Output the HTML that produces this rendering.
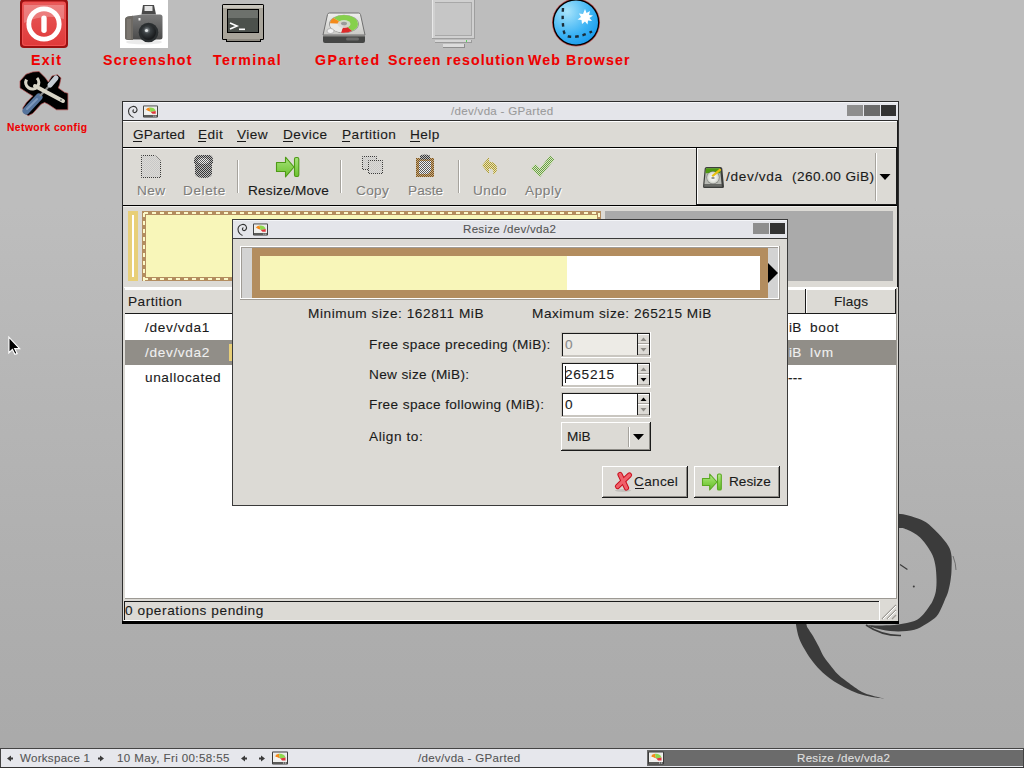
<!DOCTYPE html>
<html><head><meta charset="utf-8"><style>
html,body{margin:0;padding:0;width:1024px;height:768px;overflow:hidden}
body{position:relative;background:linear-gradient(180deg,#bdbdbd 0%,#bdbdbd 27%,#b5b5b5 53%,#aeaeae 79%,#a9a9a9 100%);font-family:"Liberation Sans",sans-serif}
.r{position:absolute}
.t{position:absolute;white-space:pre;line-height:16px;font-family:"Liberation Sans",sans-serif;-webkit-text-stroke:0.1px currentColor}
</style></head><body>
<svg class="r" style="left:0;top:0" width="1024" height="768">
<g fill="#3b3b3b">
<path d="M875.0 515.0 C878.4 512.3 891.9 513.3 898.5 513.7 C905.1 514.1 910.2 516.0 914.8 517.4 C919.4 518.8 922.1 519.6 926.0 522.3 C929.9 525.0 934.6 529.6 938.3 533.5 C942.0 537.4 946.0 542.0 948.2 545.8 C950.4 549.5 951.0 552.0 951.5 556.0 C952.0 560.0 951.6 566.1 951.5 570.0 C951.4 573.9 951.2 575.7 950.7 579.3 C950.2 582.9 949.2 588.0 948.2 591.6 C947.2 595.2 945.9 597.4 944.5 600.7 C943.1 604.0 941.3 608.6 939.7 611.5 C938.1 614.4 937.3 615.8 934.9 617.9 C932.5 620.0 928.6 622.4 925.2 624.4 C921.8 626.4 918.9 628.5 914.4 629.7 C909.9 630.9 903.7 631.4 898.3 631.4 C892.9 631.4 887.2 630.7 882.2 629.7 C877.2 628.7 868.3 626.1 868.3 625.4 C868.3 624.7 877.2 625.6 882.2 625.4 C887.2 625.2 892.9 625.1 898.3 624.4 C903.7 623.7 910.3 622.7 914.4 621.1 C918.5 619.5 920.5 617.2 923.0 614.7 C925.5 612.2 927.9 608.3 929.5 606.0 C931.1 603.7 931.7 603.1 932.7 600.7 C933.8 598.3 935.2 595.2 935.8 591.6 C936.4 588.0 936.6 583.8 936.5 579.3 C936.4 574.8 936.1 568.9 935.2 564.4 C934.3 559.9 933.5 556.5 930.9 552.0 C928.3 547.5 923.7 540.9 919.8 537.2 C915.9 533.5 910.9 531.3 907.4 529.8 C903.9 528.2 903.4 527.9 898.5 527.9 C893.6 527.9 881.9 532.1 878.0 530.0 C874.1 527.9 871.6 517.7 875.0 515.0 Z"/>
<path d="M794 605 C794.3 608.2 795.0 618.5 795.9 624.0 C796.8 629.5 797.6 634.0 799.1 638.2 C800.6 642.4 802.6 645.7 804.6 649.2 C806.6 652.7 808.4 655.7 811.0 659.2 C813.6 662.7 816.8 666.8 820.1 670.1 C823.4 673.5 826.9 676.4 831.0 679.3 C835.1 682.2 840.2 685.1 844.7 687.5 C849.2 689.9 853.5 691.9 858.0 693.5 C862.5 695.1 867.7 696.1 872.0 697.0 C876.3 697.9 882.0 698.3 884.0 698.6 C882.0 698.1 875.7 696.6 872.0 695.5 C868.3 694.4 866.1 694.2 862.0 692.0 C857.9 689.8 851.2 684.7 847.4 682.0 C843.6 679.3 841.8 678.0 839.2 675.6 C836.6 673.2 834.6 670.6 832.0 667.4 C829.4 664.2 825.9 659.9 823.7 656.5 C821.5 653.1 820.8 650.4 819.0 647.0 C817.2 643.6 814.6 638.8 813.0 636.0 C811.4 633.2 810.2 632.0 809.1 630.0 C808.0 628.0 807.1 628.2 806.4 624.0 C805.7 619.8 805.2 608.2 805.0 605.0 Z"/>
</g>
<path d="M866 625 Q882 636 901 635.5" stroke="#3b3b3b" stroke-width="1.6" fill="none"/>
<path d="M900 564.4 L907.4 569.4" stroke="#3b3b3b" stroke-width="1.2" fill="none"/>
<circle cx="913.8" cy="586.5" r="1" fill="#3b3b3b"/>
<path d="M953 556 q3 8 3 14" stroke="#3b3b3b" stroke-width="0.8" fill="none" opacity="0.7"/>
</svg>
<svg class="r" style="left:20px;top:0px" width="48" height="48" viewBox="0 0 48 48">
<defs><linearGradient id="exg" x1="0" y1="0" x2="0" y2="1"><stop offset="0" stop-color="#e85a5a"/><stop offset="1" stop-color="#e03a3a"/></linearGradient></defs>
<rect x="0" y="-1" width="48" height="49" rx="4" fill="#9a1010"/>
<rect x="2" y="1.5" width="44" height="44.5" rx="3" fill="#f05050"/>
<rect x="3" y="3" width="42" height="42" rx="3" fill="url(#exg)"/>
<path d="M4 5 h40 v14 q-20 -6 -40 4z" fill="#ffffff" opacity="0.25"/>
<circle cx="24" cy="24" r="15.2" fill="none" stroke="#ffffff" stroke-width="4.8"/>
<rect x="21.3" y="15.5" width="5.4" height="17.5" rx="2.7" fill="#ffffff"/>
</svg>
<svg class="r" style="left:120px;top:0px" width="48" height="48" viewBox="0 0 48 48">
<defs><linearGradient id="cbody" x1="0" y1="0" x2="0" y2="1"><stop offset="0" stop-color="#7a7a7a"/><stop offset="1" stop-color="#4a4a4a"/></linearGradient>
<radialGradient id="clens" cx="0.4" cy="0.35" r="0.6"><stop offset="0" stop-color="#9aa0a4"/><stop offset="0.4" stop-color="#3a3f42"/><stop offset="1" stop-color="#1a1c1e"/></radialGradient></defs>
<rect x="0" y="0" width="48" height="48" fill="#ffffff"/>
<ellipse cx="24" cy="42" rx="18" ry="2.5" fill="#000" opacity="0.08"/>
<path d="M21.5 14.5 L23 5 h11 l2 9.5z" fill="#4a4a4a"/>
<rect x="24.5" y="6" width="8" height="5" fill="#e4e4e4"/>
<path d="M5 20 q0 -3 3 -3.5 l14 -2 h18 q2.5 0 2.5 2.5 v20 q0 2.5 -2.5 2.5 h-32 q-3 0 -3 -2.5z" fill="url(#cbody)"/>
<path d="M5 20 q0 -3 3 -3.5 l5 -0.8 v24.3 h-5 q-3 0 -3 -2.5z" fill="#6e6a64"/>
<rect x="7" y="19" width="4" height="20" fill="#85817a" opacity="0.6"/>
<circle cx="28.5" cy="32.5" r="9.8" fill="#2a2e30"/>
<circle cx="28.5" cy="32.5" r="7.5" fill="url(#clens)"/>
<circle cx="26.5" cy="30.5" r="1.6" fill="#e0e4e6"/>
<rect x="18.5" y="18" width="2" height="2.5" fill="#f0f0f0"/>
</svg>
<svg class="r" style="left:216px;top:0px" width="56" height="48" viewBox="0 0 56 48">
<rect x="6" y="4" width="42" height="36" rx="1.5" fill="#000"/>
<rect x="7" y="5" width="40" height="34" fill="#a9a59b"/>
<rect x="7" y="5" width="40" height="3" fill="#c8c5bd"/>
<rect x="11" y="9" width="32" height="24" fill="#000"/>
<rect x="12" y="10" width="30" height="22" fill="#4c514c"/>
<rect x="12" y="10" width="30" height="8" fill="#6d716c"/>
<path d="M14 23 l7 3 l-7 3" stroke="#fff" stroke-width="1.6" fill="none"/>
<rect x="23" y="28.5" width="6" height="1.6" fill="#fff"/>
<rect x="10" y="39" width="35" height="3" fill="#000"/>
<rect x="11" y="39" width="33" height="2" fill="#8f8b82"/>
</svg>
<svg class="r" style="left:318px;top:0px" width="56" height="48" viewBox="0 0 56 48">
<defs><linearGradient id="gpf" x1="0" y1="0" x2="0" y2="1"><stop offset="0" stop-color="#efefed"/><stop offset="1" stop-color="#c9c9c6"/></linearGradient></defs>
<path d="M11.5 13 h29 q1.5 0 2 1.5 l4.5 20.5 h-42 l4.5 -20.5 q0.5 -1.5 2 -1.5z" fill="url(#gpf)" stroke="#707070" stroke-width="1"/>
<path d="M5 35 h42 v6 q0 2 -2 2 h-38 q-2 0 -2 -2z" fill="#454645"/>
<path d="M5 35 h42 v1.5 h-42z" fill="#8a8a88"/>
<rect x="28" y="37.5" width="13" height="3" rx="1.5" fill="#6a6b6a"/>
<ellipse cx="26" cy="24" rx="15" ry="9.2" fill="#9a9a98"/>
<ellipse cx="26" cy="24" rx="14" ry="8.5" fill="#e6e6e4"/>
<path d="M26 24 L15.5 18 A14 8.5 0 0 1 40 24 A14 8.5 0 0 1 34 31 z" fill="#86d04c"/>
<path d="M26 24 L34 31 A14 8.5 0 0 1 23 32.5 z" fill="#dd2a2a"/>
<path d="M26 24 L12 23.5 A14 8.5 0 0 1 15.5 18 z" fill="#f38a1a"/>
<path d="M26 24 L12 23.5 A14 8.5 0 0 0 23 32.5 z" fill="#e9e9e7"/>
<ellipse cx="26" cy="24" rx="6.5" ry="4" fill="#d9d9d7" opacity="0.9"/>
<ellipse cx="26" cy="23.5" rx="3" ry="1.8" fill="#9a9a9a"/>
<ellipse cx="12.5" cy="31" rx="3.5" ry="2.5" fill="#f4f4f4" stroke="#9a9a9a" stroke-width="0.6"/>
</svg>
<svg class="r" style="left:424px;top:0px" width="60" height="48" viewBox="0 0 60 48">
<rect x="8" y="-2" width="43" height="41" fill="#9e9e9e"/>
<rect x="8" y="-2" width="42" height="40" fill="#e8e8e8"/>
<rect x="9" y="-1" width="41" height="39" fill="#d0d0d0"/>
<rect x="11" y="2" width="37" height="34" fill="#a8a8a8"/>
<rect x="11" y="3" width="36" height="32" fill="#c6c6c6"/>
<rect x="11" y="40" width="37" height="3" fill="#9a9a9a"/>
<rect x="11" y="40" width="36" height="2" fill="#d6d6d6"/>
<rect x="42" y="40" width="1" height="2" fill="#5ad05a"/>
<rect x="19" y="44" width="22" height="4" fill="#8e8e8e"/>
<rect x="19" y="44" width="21" height="3" fill="#dcdcdc"/>
</svg>
<svg class="r" style="left:546px;top:0px" width="60" height="48" viewBox="0 0 60 48">
<defs><radialGradient id="wbg" cx="0.3" cy="0.25" r="0.9"><stop offset="0" stop-color="#a8e4fb"/><stop offset="0.6" stop-color="#3cb3f4"/><stop offset="1" stop-color="#1496ec"/></radialGradient></defs>
<circle cx="30" cy="22.5" r="24" fill="#c05050"/>
<circle cx="30" cy="22.5" r="23.3" fill="#000"/>
<circle cx="30" cy="22.5" r="22" fill="url(#wbg)"/>
<path d="M17 8 q-1 14 1 24 q1 4 5 4.5 q10 1.5 23 -5" stroke="#1b2b36" stroke-width="2.4" stroke-dasharray="3.5 4" fill="none"/>
<polygon fill="#fff" points="39,9 40.5,13 44,11 43,15 47,15.5 43.5,18 46,21 42,20.5 41.5,24.5 39,21.5 36,24 35.5,20 31.5,19.5 35,17 33,13.5 37,14"/>
</svg>
<svg class="r" style="left:10px;top:66px" width="70" height="54" viewBox="0 0 70 54">
<path d="M10 15 L16 8.2 L22.8 5.9 L29 5.5 L35.5 11.9 L38.3 16 L42 10 L47.4 8.7 L51 11.9 L49.7 18.2 L48.3 21.9 L54.7 26.4 L57.9 27.3 L57.9 43.8 L46.5 43.8 L38.3 38.3 L34.6 36.5 L31 38.3 L22.8 47.4 L18.2 49.7 L13.7 46.5 L12.8 42 L16.4 36.5 L22.8 30 L18.2 27.3 L10 21.9 Z" fill="#000" stroke="#b85050" stroke-width="0.7"/>
<path d="M16 45 L29 31" stroke="#56749c" stroke-width="7" stroke-linecap="round"/>
<path d="M17 43 L27 33" stroke="#7d98bc" stroke-width="2" stroke-linecap="round"/>
<path d="M30 30 L40 19" stroke="#8a8a8a" stroke-width="2"/>
<path d="M40 19 L46 12" stroke="#c5ccd4" stroke-width="5" stroke-linecap="round"/>
<path d="M25 20 L53 35" stroke="#d8d4c6" stroke-width="4" stroke-linecap="round"/>
<path d="M27 12 A6.5 6.5 0 1 1 16.5 13.5" stroke="#d8d4c6" stroke-width="3.2" fill="none"/>
<circle cx="51" cy="34" r="1" fill="#777"/>
</svg>
<div class="t" style="left:31px;top:52px;font-size:14.18px;letter-spacing:1.289px;color:#ee0000;font-weight:bold;">Exit</div>
<div class="t" style="left:103px;top:52px;font-size:14.18px;letter-spacing:1.247px;color:#ee0000;font-weight:bold;">Screenshot</div>
<div class="t" style="left:213px;top:52px;font-size:14.18px;letter-spacing:1.396px;color:#ee0000;font-weight:bold;">Terminal</div>
<div class="t" style="left:315px;top:52px;font-size:14.18px;letter-spacing:1.494px;color:#ee0000;font-weight:bold;">GParted</div>
<div class="t" style="left:388px;top:52px;font-size:14.18px;letter-spacing:1.045px;color:#ee0000;font-weight:bold;">Screen resolution</div>
<div class="t" style="left:528px;top:52px;font-size:14.18px;letter-spacing:1.120px;color:#ee0000;font-weight:bold;">Web Browser</div>
<div class="t" style="left:7px;top:120px;font-size:10.29px;letter-spacing:0.443px;color:#ee0000;font-weight:bold;">Network config</div>
<div class="r" style="left:122px;top:101px;width:777px;height:523px;background:#2e2e2e;"></div>
<div class="r" style="left:123px;top:102px;width:775px;height:18px;background:#e4e5ea;"></div>
<div class="r" style="left:123px;top:102px;width:775px;height:1px;background:#f4f5f8;"></div>
<div class="r" style="left:123px;top:121px;width:775px;height:500px;background:#dcdad5;"></div>
<div class="r" style="left:123px;top:121px;width:775px;height:1px;background:#ffffff;"></div>
<div class="t" style="left:451px;top:103px;font-size:11.55px;letter-spacing:0.305px;color:#9a9a9a;">/dev/vda - GParted</div>
<div class="r" style="left:847px;top:105px;width:16px;height:11px;background:#8e8e8e;"></div>
<div class="r" style="left:864px;top:105px;width:16px;height:11px;background:#6b6b6b;"></div>
<div class="r" style="left:881px;top:105px;width:15px;height:11px;background:#333333;"></div>
<svg class="r" style="left:126px;top:104px" width="34" height="16" viewBox="0 0 34 16">
<path d="M7.5 13.5 C3 12 1.5 8 3 5 C4.5 2 9 1.5 10.5 4 C12 6.5 10 9 8 8.5 C6.5 8 6.5 6 8 5.8" stroke="#333" stroke-width="1.1" fill="none"/>
</svg>
<svg class="r" style="left:143px;top:105px" width="15" height="13" viewBox="0 0 16 14" preserveAspectRatio="none">
<rect x="0" y="0.5" width="16" height="13" rx="1" fill="#3a3a3a"/>
<rect x="1" y="1.5" width="14" height="9.5" fill="#f0f0ee"/>
<rect x="2.2" y="2.5" width="11.6" height="7.5" fill="#e8e8e6"/>
<path d="M8 7.5 L3 5.5 Q4 3 7 2.8z" fill="#f58a1c"/>
<path d="M8 7.5 L7 2.8 Q12 2.4 13.5 6.5z" fill="#8ed84c"/>
<path d="M8 7.5 L13.5 6.5 L13.5 9.5 L10 9.5z" fill="#e0383c"/>
<path d="M8 7.5 L3 5.5 L2.5 9.5 L10 9.5z" fill="#f4f4f2"/>
<rect x="1" y="11" width="14" height="2" fill="#5a5a58"/>
<rect x="11" y="11.5" width="1.2" height="1" fill="#ddd"/><rect x="13" y="11.5" width="1.2" height="1" fill="#ddd"/>
</svg>
<svg class="r" style="left:130px;top:150px" width="440" height="32" viewBox="0 0 440 32"><defs><pattern id="pw" width="2" height="2" patternUnits="userSpaceOnUse"><rect width="1" height="1" fill="#7a7a7a"/><rect x="1" y="1" width="1" height="1" fill="#7a7a7a"/><rect x="1" y="0" width="1" height="1" fill="#f6f6f6"/><rect x="0" y="1" width="1" height="1" fill="#f6f6f6"/></pattern><pattern id="pl" width="2" height="2" patternUnits="userSpaceOnUse"><rect width="1" height="1" fill="#ffffff"/><rect x="1" y="1" width="1" height="1" fill="#ffffff"/></pattern><pattern id="pd" width="2" height="2" patternUnits="userSpaceOnUse"><rect width="1" height="1" fill="#3a3a3a"/><rect x="1" y="1" width="1" height="1" fill="#3a3a3a"/></pattern><pattern id="pm" width="2" height="2" patternUnits="userSpaceOnUse"><rect width="1" height="1" fill="#c8c8c8"/><rect x="1" y="1" width="1" height="1" fill="#c8c8c8"/></pattern><pattern id="pb" width="2" height="2" patternUnits="userSpaceOnUse"><rect width="1" height="1" fill="#8a6a3a"/><rect x="1" y="1" width="1" height="1" fill="#8a6a3a"/></pattern><pattern id="pyl" width="2" height="2" patternUnits="userSpaceOnUse"><rect width="1" height="1" fill="#a89838"/><rect x="1" y="1" width="1" height="1" fill="#a89838"/><rect x="1" y="0" width="1" height="1" fill="#ece4b0"/><rect x="0" y="1" width="1" height="1" fill="#ece4b0"/></pattern><pattern id="pg" width="2" height="2" patternUnits="userSpaceOnUse"><rect width="1" height="1" fill="#6a9a48"/><rect x="1" y="1" width="1" height="1" fill="#6a9a48"/><rect x="1" y="0" width="1" height="1" fill="#d8ecc0"/><rect x="0" y="1" width="1" height="1" fill="#d8ecc0"/></pattern><pattern id="pdl" width="2" height="2" patternUnits="userSpaceOnUse"><rect width="1" height="1" fill="#353535"/><rect x="1" y="1" width="1" height="1" fill="#353535"/><rect x="1" y="0" width="1" height="1" fill="#bdbdbd"/><rect x="0" y="1" width="1" height="1" fill="#bdbdbd"/></pattern><pattern id="pbb" width="2" height="2" patternUnits="userSpaceOnUse"><rect width="1" height="1" fill="#7a5420"/><rect x="1" y="1" width="1" height="1" fill="#7a5420"/><rect x="1" y="0" width="1" height="1" fill="#c8ab80"/><rect x="0" y="1" width="1" height="1" fill="#c8ab80"/></pattern><pattern id="pll" width="2" height="2" patternUnits="userSpaceOnUse"><rect width="1" height="1" fill="#5a5a5a"/><rect x="1" y="1" width="1" height="1" fill="#5a5a5a"/><rect x="1" y="0" width="1" height="1" fill="#f2f2f2"/><rect x="0" y="1" width="1" height="1" fill="#f2f2f2"/></pattern><linearGradient id="grn" x1="0" y1="0" x2="0" y2="1"><stop offset="0" stop-color="#a6e27a"/><stop offset="1" stop-color="#6cc22e"/></linearGradient></defs>
<path d="M11 5 h14 l6 6 v17 h-20z" fill="url(#pm)"/>
<path d="M11.5 5.5 h13.5 l5.5 5.5 v16.5 h-19z" fill="none" stroke="url(#pd)" stroke-width="1"/>
<path d="M64 10 q1 -5 5 -5 h10 q4 0 4 5 v3 h-1 v11 q-1 4 -8 4 q-8 0 -9 -4 v-11 h-1z" fill="url(#pdl)"/>
<ellipse cx="73.5" cy="11" rx="6" ry="3" fill="url(#pll)"/>
<path d="M66 15 v10 M70 16 v10 M77 16 v10 M81 15 v10" stroke="url(#pd)" stroke-width="1"/>
<path d="M232 6 h15 v14 h-15z" fill="url(#pm)"/>
<path d="M232.5 6.5 h14 v13 h-14z" fill="none" stroke="url(#pd)"/>
<path d="M238 10 h15 v14 h-15z" fill="#dcdad5"/>
<path d="M238 10 h15 v14 h-15z" fill="url(#pm)"/>
<path d="M238.5 10.5 h14 v13 h-14z" fill="none" stroke="url(#pd)"/>
<path d="M286 8 h18 v19 h-18z" fill="url(#pbb)"/>
<path d="M290 5.5 q5 -2 10 0 v4 h-10z" fill="url(#pdl)"/>
<path d="M289 11 h12 v10 l-3 3 h-9z" fill="url(#pll)"/>
<path d="M352 15.5 l7 -8.5 v4.5 q8 1 8 7 q0 4 -4 6.5 q2 -6 -4 -6.5 v5.5z" fill="url(#pyl)"/>
<path d="M401 18.5 l4.5 -4.5 l4.5 4.5 l10 -13 l4.5 4 l-14.5 17.5z" fill="url(#pg)"/>
<path d="M146.5 12.5 h9 v-5.3 l8.5 9.8 l-8.5 9.8 v-5.3 h-9 z" fill="url(#grn)" stroke="#4e9a16" stroke-width="1.1" stroke-linejoin="round"/>
<rect x="164.5" y="7.5" width="4.3" height="19" rx="1.5" fill="url(#grn)" stroke="#4e9a16" stroke-width="1.1"/>
</svg>
<div class="r" style="left:123px;top:147px;width:775px;height:1px;background:#000000;"></div>
<div class="r" style="left:123px;top:148px;width:775px;height:1px;background:#ffffff;"></div>
<div class="t" style="left:133px;top:127px;font-size:13.65px;letter-spacing:0.191px;color:#1a1a1a;">GParted</div>
<div class="r" style="left:133px;top:141px;width:9px;height:1px;background:#1a1a1a;"></div>
<div class="t" style="left:198px;top:127px;font-size:13.65px;letter-spacing:0.435px;color:#1a1a1a;">Edit</div>
<div class="r" style="left:198px;top:141px;width:8px;height:1px;background:#1a1a1a;"></div>
<div class="t" style="left:237px;top:127px;font-size:13.65px;letter-spacing:0.404px;color:#1a1a1a;">View</div>
<div class="r" style="left:237px;top:141px;width:9px;height:1px;background:#1a1a1a;"></div>
<div class="t" style="left:283px;top:127px;font-size:13.65px;letter-spacing:0.482px;color:#1a1a1a;">Device</div>
<div class="r" style="left:283px;top:141px;width:10px;height:1px;background:#1a1a1a;"></div>
<div class="t" style="left:342px;top:127px;font-size:13.65px;letter-spacing:0.476px;color:#1a1a1a;">Partition</div>
<div class="r" style="left:342px;top:141px;width:8px;height:1px;background:#1a1a1a;"></div>
<div class="t" style="left:410px;top:127px;font-size:13.65px;letter-spacing:0.416px;color:#1a1a1a;">Help</div>
<div class="r" style="left:410px;top:141px;width:10px;height:1px;background:#1a1a1a;"></div>
<div class="r" style="left:123px;top:205px;width:775px;height:1px;background:#000000;"></div>
<div class="r" style="left:123px;top:206px;width:775px;height:1px;background:#f0efec;"></div>
<div class="t" style="left:137px;top:183px;font-size:13.65px;letter-spacing:0.383px;color:#7f7e7b;text-shadow:1px 1px 0 #fff">New</div>
<div class="t" style="left:183px;top:183px;font-size:13.65px;letter-spacing:0.567px;color:#7f7e7b;text-shadow:1px 1px 0 #fff">Delete</div>
<div class="t" style="left:248px;top:183px;font-size:13.65px;letter-spacing:0.208px;color:#1a1a1a;">Resize/Move</div>
<div class="t" style="left:356px;top:183px;font-size:13.65px;letter-spacing:0.306px;color:#7f7e7b;text-shadow:1px 1px 0 #fff">Copy</div>
<div class="t" style="left:408px;top:183px;font-size:13.65px;letter-spacing:0.062px;color:#7f7e7b;text-shadow:1px 1px 0 #fff">Paste</div>
<div class="t" style="left:473px;top:183px;font-size:13.65px;letter-spacing:0.361px;color:#7f7e7b;text-shadow:1px 1px 0 #fff">Undo</div>
<div class="t" style="left:525px;top:183px;font-size:13.65px;letter-spacing:0.536px;color:#7f7e7b;text-shadow:1px 1px 0 #fff">Apply</div>
<div class="r" style="left:237px;top:160px;width:1px;height:33px;background:#a6a39d;"></div>
<div class="r" style="left:238px;top:160px;width:1px;height:33px;background:#ffffff;"></div>
<div class="r" style="left:340px;top:160px;width:1px;height:33px;background:#a6a39d;"></div>
<div class="r" style="left:341px;top:160px;width:1px;height:33px;background:#ffffff;"></div>
<div class="r" style="left:458px;top:160px;width:1px;height:33px;background:#a6a39d;"></div>
<div class="r" style="left:459px;top:160px;width:1px;height:33px;background:#ffffff;"></div>
<div class="r" style="left:696px;top:148px;width:201px;height:57px;background:#1a1a1a;"></div>
<div class="r" style="left:697px;top:148px;width:199px;height:56px;background:#ffffff;"></div>
<div class="r" style="left:698px;top:149px;width:198px;height:55px;background:#dcdad5;"></div>
<div class="t" style="left:726px;top:169px;font-size:13.65px;letter-spacing:0.650px;color:#1a1a1a;">/dev/vda</div>
<div class="t" style="left:792px;top:169px;font-size:13.65px;letter-spacing:0.438px;color:#1a1a1a;">(260.00 GiB)</div>
<div class="r" style="left:875px;top:153px;width:1px;height:48px;background:#a6a39d;"></div>
<div class="r" style="left:876px;top:153px;width:1px;height:48px;background:#ffffff;"></div>
<svg class="r" style="left:702px;top:166px" width="23" height="23" viewBox="0 0 23 23">
<defs><radialGradient id="hdisk" cx="0.5" cy="0.5" r="0.5"><stop offset="0" stop-color="#ffffff"/><stop offset="0.7" stop-color="#e4e6e0"/><stop offset="1" stop-color="#c8ccc4"/></radialGradient></defs>
<path d="M3.5 1 h15 q1.5 0 1.8 1.5 l1.7 18 q0 1.5 -1.5 1.5 h-18 q-1.5 0 -1.5 -1.5 l1.7 -18 q0.3 -1.5 1.8 -1.5z" fill="#3c3e3c"/>
<path d="M4 2.2 h14 l1.6 16 h-17.2z" fill="#b8bab4"/>
<path d="M4 2.2 h14 l0.5 5 h-15z" fill="#4e9a10"/>
<path d="M2.4 18.2 h17.2 l0.3 2.6 h-17.8z" fill="#6a6c68"/>
<circle cx="11" cy="11.5" r="6.6" fill="#555" opacity="0.55"/>
<circle cx="11" cy="11.5" r="6" fill="url(#hdisk)"/>
<ellipse cx="11" cy="12" rx="1.8" ry="1.1" fill="#8a8c88"/>
<path d="M9.5 9.5 L17.5 2.8 Q19.5 2.5 19 4.5 L11 11z" fill="#e8c010"/>
</svg>
<svg class="r" style="left:879px;top:173px" width="13" height="8"><polygon points="0.5,1 11.5,1 6,7" fill="#000"/></svg>
<div class="r" style="left:128px;top:211px;width:10px;height:70px;background:#e8cf78;"></div>
<div class="r" style="left:132px;top:215px;width:2px;height:62px;background:#ffffff;"></div>
<div class="r" style="left:142px;top:211px;width:459px;height:70px;background:#b38d5f;"></div>
<div class="r" style="left:146px;top:215px;width:451px;height:62px;background:#f8f6b9;"></div>
<svg class="r" style="left:142px;top:211px" width="459" height="70" fill="#fbf8c8"><rect x="2" y="1" width="4" height="2"/><rect x="2" y="67" width="4" height="2"/><rect x="10" y="1" width="4" height="2"/><rect x="10" y="67" width="4" height="2"/><rect x="18" y="1" width="4" height="2"/><rect x="18" y="67" width="4" height="2"/><rect x="26" y="1" width="4" height="2"/><rect x="26" y="67" width="4" height="2"/><rect x="34" y="1" width="4" height="2"/><rect x="34" y="67" width="4" height="2"/><rect x="42" y="1" width="4" height="2"/><rect x="42" y="67" width="4" height="2"/><rect x="50" y="1" width="4" height="2"/><rect x="50" y="67" width="4" height="2"/><rect x="58" y="1" width="4" height="2"/><rect x="58" y="67" width="4" height="2"/><rect x="66" y="1" width="4" height="2"/><rect x="66" y="67" width="4" height="2"/><rect x="74" y="1" width="4" height="2"/><rect x="74" y="67" width="4" height="2"/><rect x="82" y="1" width="4" height="2"/><rect x="82" y="67" width="4" height="2"/><rect x="90" y="1" width="4" height="2"/><rect x="90" y="67" width="4" height="2"/><rect x="98" y="1" width="4" height="2"/><rect x="98" y="67" width="4" height="2"/><rect x="106" y="1" width="4" height="2"/><rect x="106" y="67" width="4" height="2"/><rect x="114" y="1" width="4" height="2"/><rect x="114" y="67" width="4" height="2"/><rect x="122" y="1" width="4" height="2"/><rect x="122" y="67" width="4" height="2"/><rect x="130" y="1" width="4" height="2"/><rect x="130" y="67" width="4" height="2"/><rect x="138" y="1" width="4" height="2"/><rect x="138" y="67" width="4" height="2"/><rect x="146" y="1" width="4" height="2"/><rect x="146" y="67" width="4" height="2"/><rect x="154" y="1" width="4" height="2"/><rect x="154" y="67" width="4" height="2"/><rect x="162" y="1" width="4" height="2"/><rect x="162" y="67" width="4" height="2"/><rect x="170" y="1" width="4" height="2"/><rect x="170" y="67" width="4" height="2"/><rect x="178" y="1" width="4" height="2"/><rect x="178" y="67" width="4" height="2"/><rect x="186" y="1" width="4" height="2"/><rect x="186" y="67" width="4" height="2"/><rect x="194" y="1" width="4" height="2"/><rect x="194" y="67" width="4" height="2"/><rect x="202" y="1" width="4" height="2"/><rect x="202" y="67" width="4" height="2"/><rect x="210" y="1" width="4" height="2"/><rect x="210" y="67" width="4" height="2"/><rect x="218" y="1" width="4" height="2"/><rect x="218" y="67" width="4" height="2"/><rect x="226" y="1" width="4" height="2"/><rect x="226" y="67" width="4" height="2"/><rect x="234" y="1" width="4" height="2"/><rect x="234" y="67" width="4" height="2"/><rect x="242" y="1" width="4" height="2"/><rect x="242" y="67" width="4" height="2"/><rect x="250" y="1" width="4" height="2"/><rect x="250" y="67" width="4" height="2"/><rect x="258" y="1" width="4" height="2"/><rect x="258" y="67" width="4" height="2"/><rect x="266" y="1" width="4" height="2"/><rect x="266" y="67" width="4" height="2"/><rect x="274" y="1" width="4" height="2"/><rect x="274" y="67" width="4" height="2"/><rect x="282" y="1" width="4" height="2"/><rect x="282" y="67" width="4" height="2"/><rect x="290" y="1" width="4" height="2"/><rect x="290" y="67" width="4" height="2"/><rect x="298" y="1" width="4" height="2"/><rect x="298" y="67" width="4" height="2"/><rect x="306" y="1" width="4" height="2"/><rect x="306" y="67" width="4" height="2"/><rect x="314" y="1" width="4" height="2"/><rect x="314" y="67" width="4" height="2"/><rect x="322" y="1" width="4" height="2"/><rect x="322" y="67" width="4" height="2"/><rect x="330" y="1" width="4" height="2"/><rect x="330" y="67" width="4" height="2"/><rect x="338" y="1" width="4" height="2"/><rect x="338" y="67" width="4" height="2"/><rect x="346" y="1" width="4" height="2"/><rect x="346" y="67" width="4" height="2"/><rect x="354" y="1" width="4" height="2"/><rect x="354" y="67" width="4" height="2"/><rect x="362" y="1" width="4" height="2"/><rect x="362" y="67" width="4" height="2"/><rect x="370" y="1" width="4" height="2"/><rect x="370" y="67" width="4" height="2"/><rect x="378" y="1" width="4" height="2"/><rect x="378" y="67" width="4" height="2"/><rect x="386" y="1" width="4" height="2"/><rect x="386" y="67" width="4" height="2"/><rect x="394" y="1" width="4" height="2"/><rect x="394" y="67" width="4" height="2"/><rect x="402" y="1" width="4" height="2"/><rect x="402" y="67" width="4" height="2"/><rect x="410" y="1" width="4" height="2"/><rect x="410" y="67" width="4" height="2"/><rect x="418" y="1" width="4" height="2"/><rect x="418" y="67" width="4" height="2"/><rect x="426" y="1" width="4" height="2"/><rect x="426" y="67" width="4" height="2"/><rect x="434" y="1" width="4" height="2"/><rect x="434" y="67" width="4" height="2"/><rect x="442" y="1" width="4" height="2"/><rect x="442" y="67" width="4" height="2"/><rect x="450" y="1" width="4" height="2"/><rect x="450" y="67" width="4" height="2"/><rect x="1" y="2" width="2" height="4"/><rect x="456" y="2" width="2" height="4"/><rect x="1" y="10" width="2" height="4"/><rect x="456" y="10" width="2" height="4"/><rect x="1" y="18" width="2" height="4"/><rect x="456" y="18" width="2" height="4"/><rect x="1" y="26" width="2" height="4"/><rect x="456" y="26" width="2" height="4"/><rect x="1" y="34" width="2" height="4"/><rect x="456" y="34" width="2" height="4"/><rect x="1" y="42" width="2" height="4"/><rect x="456" y="42" width="2" height="4"/><rect x="1" y="50" width="2" height="4"/><rect x="456" y="50" width="2" height="4"/><rect x="1" y="58" width="2" height="4"/><rect x="456" y="58" width="2" height="4"/><rect x="1" y="66" width="2" height="4"/><rect x="456" y="66" width="2" height="4"/></svg>
<div class="r" style="left:605px;top:211px;width:288px;height:70px;background:#aaaaaa;"></div>
<div class="r" style="left:897px;top:121px;width:1px;height:166px;background:#1a1a1a;"></div>
<div class="r" style="left:124px;top:287px;width:773px;height:1px;background:#ffffff;"></div>
<div class="r" style="left:125px;top:288px;width:771px;height:311px;background:#ffffff;"></div>
<div class="r" style="left:125px;top:289px;width:771px;height:25px;background:#dcdad5;"></div>
<div class="r" style="left:125px;top:289px;width:771px;height:1px;background:#ffffff;"></div>
<div class="r" style="left:125px;top:313px;width:771px;height:1px;background:#1a1a1a;"></div>
<div class="r" style="left:805px;top:289px;width:1px;height:24px;background:#1a1a1a;"></div>
<div class="r" style="left:806px;top:289px;width:1px;height:24px;background:#ffffff;"></div>
<div class="r" style="left:895px;top:289px;width:1px;height:25px;background:#1a1a1a;"></div>
<div class="t" style="left:128px;top:294px;font-size:13.65px;letter-spacing:0.476px;color:#1a1a1a;">Partition</div>
<div class="t" style="left:834px;top:294px;font-size:13.65px;letter-spacing:0.165px;color:#1a1a1a;">Flags</div>
<div class="r" style="left:125px;top:340px;width:771px;height:25px;background:#918e88;"></div>
<div class="t" style="left:145px;top:320px;font-size:13.65px;letter-spacing:0.656px;color:#1a1a1a;">/dev/vda1</div>
<div class="t" style="left:145px;top:345px;font-size:13.65px;letter-spacing:0.656px;color:#f0f0f0;">/dev/vda2</div>
<div class="t" style="left:145px;top:370px;font-size:13.65px;letter-spacing:0.592px;color:#1a1a1a;">unallocated</div>
<div class="r" style="left:229px;top:344px;width:4px;height:17px;background:#e8cf78;"></div>
<div class="t" style="left:789px;top:320px;font-size:13.65px;letter-spacing:0.219px;color:#1a1a1a;">iB</div>
<div class="t" style="left:810px;top:320px;font-size:13.65px;letter-spacing:0.696px;color:#1a1a1a;">boot</div>
<div class="t" style="left:789px;top:345px;font-size:13.65px;letter-spacing:0.219px;color:#f0f0f0;">iB</div>
<div class="t" style="left:810px;top:345px;font-size:13.65px;letter-spacing:0.940px;color:#f0f0f0;">lvm</div>
<div class="t" style="left:788px;top:370px;font-size:13.65px;letter-spacing:0.161px;color:#1a1a1a;">---</div>
<div class="r" style="left:125px;top:598px;width:771px;height:1px;background:#9d9a94;"></div>
<div class="r" style="left:896px;top:288px;width:1px;height:311px;background:#9d9a94;"></div>
<div class="r" style="left:124px;top:601px;width:756px;height:1px;background:#1a1a1a;"></div>
<div class="r" style="left:124px;top:601px;width:1px;height:19px;background:#1a1a1a;"></div>
<div class="r" style="left:879px;top:601px;width:1px;height:19px;background:#ffffff;"></div>
<div class="r" style="left:124px;top:620px;width:756px;height:1px;background:#ffffff;"></div>
<div class="t" style="left:125px;top:603px;font-size:13.65px;letter-spacing:0.576px;color:#1a1a1a;">0 operations pending</div>
<svg class="r" style="left:880px;top:602px" width="17" height="18"><g stroke="#9d9a94" stroke-width="1.2"><line x1="2" y1="17" x2="16" y2="3"/><line x1="7" y1="17" x2="16" y2="8"/><line x1="12" y1="17" x2="16" y2="13"/></g><g stroke="#fff" stroke-width="1"><line x1="3" y1="17" x2="16" y2="4"/><line x1="8" y1="17" x2="16" y2="9"/></g></svg>
<div class="r" style="left:122px;top:621px;width:777px;height:3px;background:#000000;"></div>
<div class="r" style="left:232px;top:219px;width:556px;height:287px;background:#3a3a3a;"></div>
<div class="r" style="left:233px;top:220px;width:554px;height:18px;background:#e4e5ea;"></div>
<div class="r" style="left:233px;top:220px;width:554px;height:1px;background:#f4f5f8;"></div>
<div class="r" style="left:233px;top:239px;width:554px;height:266px;background:#dcdad5;"></div>
<div class="t" style="left:463px;top:221px;font-size:11.55px;letter-spacing:0.291px;color:#555555;">Resize /dev/vda2</div>
<div class="r" style="left:753px;top:223px;width:16px;height:11px;background:#8e8e8e;"></div>
<div class="r" style="left:770px;top:223px;width:15px;height:11px;background:#333333;"></div>
<div class="r" style="left:240px;top:246px;width:540px;height:54px;background:#a09c96;"></div>
<div class="r" style="left:240px;top:246px;width:539px;height:53px;background:#ffffff;"></div>
<div class="r" style="left:241px;top:247px;width:537px;height:51px;background:#a09c96;"></div>
<div class="r" style="left:242px;top:248px;width:536px;height:50px;background:#d3d3d3;"></div>
<div class="r" style="left:252px;top:248px;width:516px;height:50px;background:#b38d5f;"></div>
<div class="r" style="left:260px;top:256px;width:307px;height:34px;background:#f8f6b9;"></div>
<div class="r" style="left:567px;top:256px;width:193px;height:34px;background:#ffffff;"></div>
<svg class="r" style="left:767px;top:262px" width="12" height="22"><polygon points="1,1 11,11 1,21" fill="#000"/></svg>
<div class="t" style="left:308px;top:306px;font-size:13.65px;letter-spacing:0.556px;color:#1a1a1a;">Minimum size: 162811 MiB</div>
<div class="t" style="left:532px;top:306px;font-size:13.65px;letter-spacing:0.515px;color:#1a1a1a;">Maximum size: 265215 MiB</div>
<div class="t" style="left:369px;top:337px;font-size:13.65px;letter-spacing:0.356px;color:#1a1a1a;">Free space preceding (MiB):</div>
<div class="t" style="left:369px;top:367px;font-size:13.65px;letter-spacing:0.326px;color:#1a1a1a;">New size (MiB):</div>
<div class="t" style="left:369px;top:397px;font-size:13.65px;letter-spacing:0.373px;color:#1a1a1a;">Free space following (MiB):</div>
<div class="t" style="left:369px;top:429px;font-size:13.65px;letter-spacing:0.559px;color:#1a1a1a;">Align to:</div>
<div class="r" style="left:561px;top:332px;width:90px;height:26px;background:#ffffff;"></div>
<div class="r" style="left:561px;top:332px;width:89px;height:25px;background:#c9c6c0;"></div>
<div class="r" style="left:562px;top:333px;width:88px;height:23px;background:#1a1a1a;"></div>
<div class="r" style="left:563px;top:334px;width:86px;height:21px;background:#edebe6;"></div>
<div class="r" style="left:563px;top:355px;width:87px;height:1px;background:#c9c6c0;"></div>
<div class="r" style="left:637px;top:334px;width:1px;height:21px;background:#1a1a1a;"></div>
<div class="r" style="left:638px;top:334px;width:11px;height:21px;background:#dcdad5;"></div>
<div class="r" style="left:638px;top:334px;width:11px;height:1px;background:#ffffff;"></div>
<div class="r" style="left:638px;top:343px;width:11px;height:1px;background:#a6a39d;"></div>
<div class="r" style="left:638px;top:344px;width:11px;height:1px;background:#ffffff;"></div>
<div class="r" style="left:638px;top:354px;width:11px;height:1px;background:#a6a39d;"></div>
<svg class="r" style="left:638px;top:334px" width="11" height="22"><polygon points="2.5,7 8.5,7 5.5,3.5" fill="#8d8b86"/><polygon points="2.5,14 8.5,14 5.5,17.5" fill="#8d8b86"/></svg>
<div class="t" style="left:565px;top:337px;font-size:13.65px;letter-spacing:0.706px;color:#8a8a8a;">0</div>
<div class="r" style="left:561px;top:362px;width:90px;height:26px;background:#ffffff;"></div>
<div class="r" style="left:561px;top:362px;width:89px;height:25px;background:#c9c6c0;"></div>
<div class="r" style="left:562px;top:363px;width:88px;height:23px;background:#1a1a1a;"></div>
<div class="r" style="left:563px;top:364px;width:86px;height:21px;background:#ffffff;"></div>
<div class="r" style="left:563px;top:385px;width:87px;height:1px;background:#c9c6c0;"></div>
<div class="r" style="left:637px;top:364px;width:1px;height:21px;background:#1a1a1a;"></div>
<div class="r" style="left:638px;top:364px;width:11px;height:21px;background:#dcdad5;"></div>
<div class="r" style="left:638px;top:364px;width:11px;height:1px;background:#ffffff;"></div>
<div class="r" style="left:638px;top:373px;width:11px;height:1px;background:#a6a39d;"></div>
<div class="r" style="left:638px;top:374px;width:11px;height:1px;background:#ffffff;"></div>
<div class="r" style="left:638px;top:384px;width:11px;height:1px;background:#a6a39d;"></div>
<svg class="r" style="left:638px;top:364px" width="11" height="22"><polygon points="2.5,7 8.5,7 5.5,3.5" fill="#8d8b86"/><polygon points="2.5,14 8.5,14 5.5,17.5" fill="#000"/></svg>
<div class="t" style="left:565px;top:367px;font-size:13.65px;letter-spacing:0.706px;color:#1a1a1a;">265215</div>
<div class="r" style="left:565px;top:366px;width:1px;height:17px;background:#1a1a1a;"></div>
<div class="r" style="left:561px;top:392px;width:90px;height:26px;background:#ffffff;"></div>
<div class="r" style="left:561px;top:392px;width:89px;height:25px;background:#c9c6c0;"></div>
<div class="r" style="left:562px;top:393px;width:88px;height:23px;background:#1a1a1a;"></div>
<div class="r" style="left:563px;top:394px;width:86px;height:21px;background:#ffffff;"></div>
<div class="r" style="left:563px;top:415px;width:87px;height:1px;background:#c9c6c0;"></div>
<div class="r" style="left:637px;top:394px;width:1px;height:21px;background:#1a1a1a;"></div>
<div class="r" style="left:638px;top:394px;width:11px;height:21px;background:#dcdad5;"></div>
<div class="r" style="left:638px;top:394px;width:11px;height:1px;background:#ffffff;"></div>
<div class="r" style="left:638px;top:403px;width:11px;height:1px;background:#a6a39d;"></div>
<div class="r" style="left:638px;top:404px;width:11px;height:1px;background:#ffffff;"></div>
<div class="r" style="left:638px;top:414px;width:11px;height:1px;background:#a6a39d;"></div>
<svg class="r" style="left:638px;top:394px" width="11" height="22"><polygon points="2.5,7 8.5,7 5.5,3.5" fill="#000"/><polygon points="2.5,14 8.5,14 5.5,17.5" fill="#8d8b86"/></svg>
<div class="t" style="left:565px;top:397px;font-size:13.65px;letter-spacing:0.706px;color:#1a1a1a;">0</div>
<div class="r" style="left:561px;top:422px;width:90px;height:29px;background:#1a1a1a;"></div>
<div class="r" style="left:561px;top:422px;width:89px;height:28px;background:#ffffff;"></div>
<div class="r" style="left:562px;top:423px;width:88px;height:27px;background:#8d8b86;"></div>
<div class="r" style="left:562px;top:423px;width:87px;height:26px;background:#dcdad5;"></div>
<div class="t" style="left:567px;top:429px;font-size:13.65px;letter-spacing:0.108px;color:#1a1a1a;">MiB</div>
<div class="r" style="left:628px;top:427px;width:1px;height:20px;background:#a6a39d;"></div>
<div class="r" style="left:629px;top:427px;width:1px;height:20px;background:#ffffff;"></div>
<svg class="r" style="left:632px;top:433px" width="13" height="8"><polygon points="1,1 12,1 6.5,7" fill="#000"/></svg>
<div class="r" style="left:602px;top:466px;width:86px;height:32px;background:#1a1a1a;"></div>
<div class="r" style="left:602px;top:466px;width:85px;height:31px;background:#ffffff;"></div>
<div class="r" style="left:603px;top:467px;width:84px;height:30px;background:#8d8b86;"></div>
<div class="r" style="left:603px;top:467px;width:83px;height:29px;background:#dcdad5;"></div>
<div class="r" style="left:694px;top:466px;width:86px;height:32px;background:#1a1a1a;"></div>
<div class="r" style="left:694px;top:466px;width:85px;height:31px;background:#ffffff;"></div>
<div class="r" style="left:695px;top:467px;width:84px;height:30px;background:#8d8b86;"></div>
<div class="r" style="left:695px;top:467px;width:83px;height:29px;background:#dcdad5;"></div>
<div class="t" style="left:634px;top:474px;font-size:13.65px;letter-spacing:0.284px;color:#1a1a1a;">Cancel</div>
<div class="r" style="left:635px;top:488px;width:9px;height:1px;background:#1a1a1a;"></div>
<div class="t" style="left:729px;top:474px;font-size:13.65px;letter-spacing:0.014px;color:#1a1a1a;">Resize</div>
<svg class="r" style="left:236px;top:222px" width="32" height="16" viewBox="0 0 32 16">
<path d="M6.5 13.5 C2.5 12 1 8 2.5 5 C4 2 8.5 1.5 10 4 C11.5 6.5 9.5 9 7.5 8.5 C6 8 6 6 7.5 5.8" stroke="#333" stroke-width="1.1" fill="none"/>
</svg>
<svg class="r" style="left:253px;top:223px" width="15" height="13" viewBox="0 0 16 14" preserveAspectRatio="none">
<rect x="0" y="0.5" width="16" height="13" rx="1" fill="#3a3a3a"/>
<rect x="1" y="1.5" width="14" height="9.5" fill="#f0f0ee"/>
<rect x="2.2" y="2.5" width="11.6" height="7.5" fill="#e8e8e6"/>
<path d="M8 7.5 L3 5.5 Q4 3 7 2.8z" fill="#f58a1c"/>
<path d="M8 7.5 L7 2.8 Q12 2.4 13.5 6.5z" fill="#8ed84c"/>
<path d="M8 7.5 L13.5 6.5 L13.5 9.5 L10 9.5z" fill="#e0383c"/>
<path d="M8 7.5 L3 5.5 L2.5 9.5 L10 9.5z" fill="#f4f4f2"/>
<rect x="1" y="11" width="14" height="2" fill="#5a5a58"/>
<rect x="11" y="11.5" width="1.2" height="1" fill="#ddd"/><rect x="13" y="11.5" width="1.2" height="1" fill="#ddd"/>
</svg>
<svg class="r" style="left:608px;top:466px" width="32" height="30" viewBox="0 0 32 30">
<ellipse cx="15" cy="24.5" rx="8" ry="1.5" fill="#000" opacity="0.12"/>
<g stroke-linecap="round" fill="none">
<path d="M12 8.5 L18.5 22" stroke="#c8101e" stroke-width="5.2"/>
<path d="M21.5 9 L9.5 20.5" stroke="#c8101e" stroke-width="5.2"/>
<path d="M12 8.5 L18.5 22" stroke="#f0606a" stroke-width="3.2"/>
<path d="M21.5 9 L9.5 20.5" stroke="#f0606a" stroke-width="3.2"/>
</g>
</svg>
<svg class="r" style="left:696px;top:468px" width="32" height="28" viewBox="0 0 32 28">
<defs><linearGradient id="grn2" x1="0" y1="0" x2="0" y2="1"><stop offset="0" stop-color="#b4ea8a"/><stop offset="0.5" stop-color="#88d44e"/><stop offset="1" stop-color="#62b82a"/></linearGradient></defs>
<path d="M6.5 10.5 h7.2 v-4.5 l7.3 8 l-7.3 8 v-4.5 h-7.2z" fill="url(#grn2)" stroke="#5aa820" stroke-width="1.1" stroke-linejoin="round"/>
<rect x="21.5" y="6" width="3.8" height="16" rx="1.3" fill="url(#grn2)" stroke="#5aa820" stroke-width="1.1"/>
</svg>
<div class="r" style="left:0px;top:748px;width:1024px;height:20px;background:#444444;"></div>
<div class="r" style="left:1px;top:749px;width:1022px;height:18px;background:#e6e7ec;"></div>
<div class="r" style="left:0px;top:767px;width:1024px;height:1px;background:#333333;"></div>
<div class="t" style="left:20px;top:750px;font-size:11.55px;letter-spacing:0.285px;color:#555555;">Workspace 1</div>
<div class="t" style="left:117px;top:750px;font-size:11.55px;letter-spacing:0.385px;color:#555555;">10 May, Fri 00:58:55</div>
<div class="t" style="left:418px;top:750px;font-size:11.55px;letter-spacing:0.305px;color:#555555;">/dev/vda - GParted</div>
<div class="r" style="left:647px;top:750px;width:376px;height:16px;background:#6b6b6b;"></div>
<div class="t" style="left:797px;top:750px;font-size:11.55px;letter-spacing:0.291px;color:#e0e0e0;">Resize /dev/vda2</div>
<svg class="r" style="left:0;top:748px" width="1024" height="20"><g fill="#3a3a3a"><polygon points="7,10.5 11,7.5 11,13.5"/><rect x="11" y="9.5" width="2" height="2"/><polygon points="104,10.5 100,7.5 100,13.5"/><rect x="98" y="9.5" width="2" height="2"/><polygon points="241,10.5 245,7.5 245,13.5"/><rect x="245" y="9.5" width="2" height="2"/><polygon points="265,10.5 261,7.5 261,13.5"/><rect x="259" y="9.5" width="2" height="2"/></g></svg>
<svg class="r" style="left:272px;top:751px" width="16" height="14" viewBox="0 0 16 14" preserveAspectRatio="none">
<rect x="0" y="0.5" width="16" height="13" rx="1" fill="#3a3a3a"/>
<rect x="1" y="1.5" width="14" height="9.5" fill="#f0f0ee"/>
<rect x="2.2" y="2.5" width="11.6" height="7.5" fill="#e8e8e6"/>
<path d="M8 7.5 L3 5.5 Q4 3 7 2.8z" fill="#f58a1c"/>
<path d="M8 7.5 L7 2.8 Q12 2.4 13.5 6.5z" fill="#8ed84c"/>
<path d="M8 7.5 L13.5 6.5 L13.5 9.5 L10 9.5z" fill="#e0383c"/>
<path d="M8 7.5 L3 5.5 L2.5 9.5 L10 9.5z" fill="#f4f4f2"/>
<rect x="1" y="11" width="14" height="2" fill="#5a5a58"/>
<rect x="11" y="11.5" width="1.2" height="1" fill="#ddd"/><rect x="13" y="11.5" width="1.2" height="1" fill="#ddd"/>
</svg>
<svg class="r" style="left:648px;top:751px" width="16" height="14" viewBox="0 0 16 14" preserveAspectRatio="none">
<rect x="0" y="0.5" width="16" height="13" rx="1" fill="#3a3a3a"/>
<rect x="1" y="1.5" width="14" height="9.5" fill="#f0f0ee"/>
<rect x="2.2" y="2.5" width="11.6" height="7.5" fill="#e8e8e6"/>
<path d="M8 7.5 L3 5.5 Q4 3 7 2.8z" fill="#f58a1c"/>
<path d="M8 7.5 L7 2.8 Q12 2.4 13.5 6.5z" fill="#8ed84c"/>
<path d="M8 7.5 L13.5 6.5 L13.5 9.5 L10 9.5z" fill="#e0383c"/>
<path d="M8 7.5 L3 5.5 L2.5 9.5 L10 9.5z" fill="#f4f4f2"/>
<rect x="1" y="11" width="14" height="2" fill="#5a5a58"/>
<rect x="11" y="11.5" width="1.2" height="1" fill="#ddd"/><rect x="13" y="11.5" width="1.2" height="1" fill="#ddd"/>
</svg>
<svg class="r" style="left:6px;top:334px" width="18" height="24" viewBox="0 0 18 24">
<polygon points="2.9,3.2 2.9,18.8 6.4,15.4 8.9,20.3 11.1,19.6 8.7,14.6 13.6,14.6" fill="#000" stroke="#fff" stroke-width="1.2" stroke-linejoin="miter"/>
</svg>
</body></html>
